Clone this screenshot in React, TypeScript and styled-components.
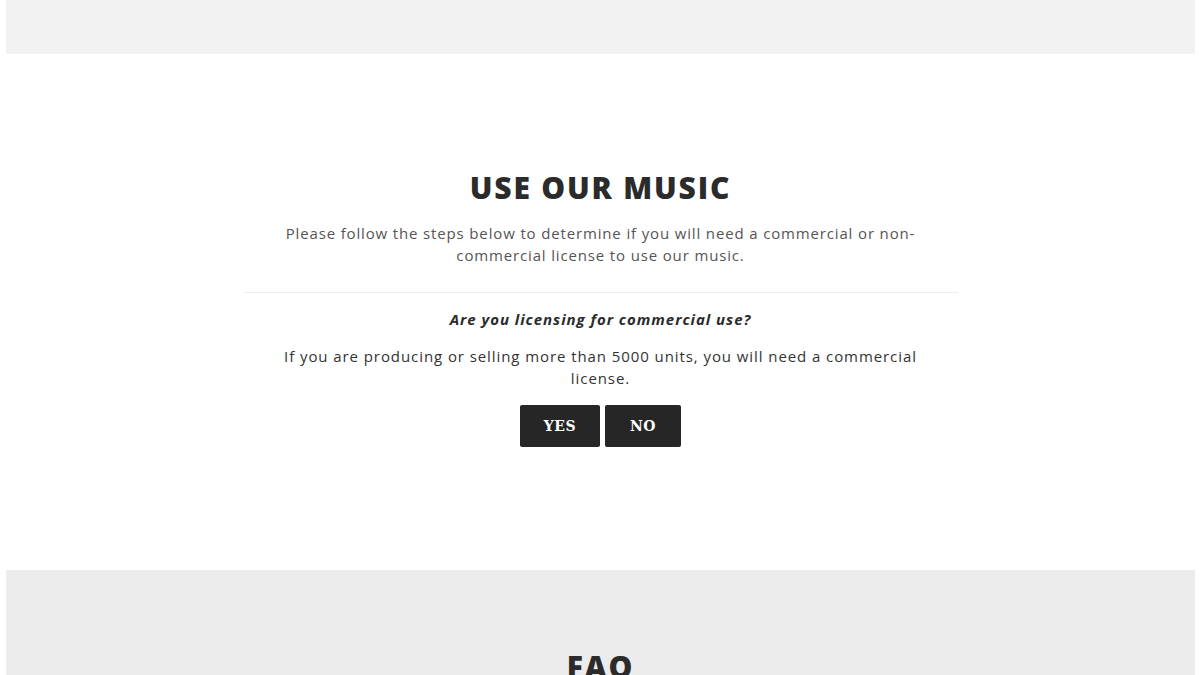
import React from "react";
import styled, { createGlobalStyle } from "styled-components";

const Global = createGlobalStyle`
  html, body { margin: 0; padding: 0; background: #fff; }
  body { font-family: "Open Sans", "Liberation Sans", sans-serif; overflow: hidden; }
`;

const Page = styled.div`
  padding: 0 5px 0 6px;
  width: 1200px;
  box-sizing: border-box;
`;

const TopBar = styled.header`
  height: 54px;
  background: #f2f2f2;
`;

const Main = styled.section`
  height: 516px;
  box-sizing: border-box;
  padding-top: 114px;
  display: flex;
  flex-direction: column;
  align-items: center;
`;

const Title = styled.h1`
  margin: 0;
  font-family: "Open Sans", sans-serif;
  font-weight: 800;
  font-size: 30px;
  line-height: 40px;
  color: #2b2b2b;
  letter-spacing: 1.8px;
`;

const Intro = styled.p`
  margin: 14px 0 0;
  width: 660px;
  text-align: center;
  font-size: 15px;
  line-height: 22px;
  letter-spacing: 0.85px;
  color: #555;
  font-weight: 400;
`;

const Divider = styled.hr`
  width: 714px;
  border: 0;
  border-top: 1px solid #ececec;
  margin: 26px 0 0;
`;

const Question = styled.h3`
  margin: 16px 0 0;
  font-size: 15px;
  line-height: 20px;
  letter-spacing: 0.95px;
  font-style: italic;
  font-weight: 700;
  color: #2b2b2b;
`;

const Detail = styled.p`
  margin: 16px 0 0;
  width: 660px;
  text-align: center;
  font-size: 15px;
  line-height: 22px;
  letter-spacing: 0.92px;
  color: #333;
`;

const Buttons = styled.div`
  margin-top: 16px;
  display: flex;
  gap: 5px;
`;

const Btn = styled.button<{ $w: number }>`
  width: ${(p) => p.$w}px;
  height: 42px;
  background: #262626;
  color: #fff;
  border: 0;
  border-radius: 2px;
  font-family: "DejaVu Serif", "Liberation Serif", serif;
  font-weight: 700;
  font-size: 14px;
  letter-spacing: 0.5px;
  cursor: pointer;
`;

const Faq = styled.section`
  height: 105px;
  overflow: hidden;
  background: #ececec;
  padding-top: 77px;
  box-sizing: border-box;
  display: flex;
  justify-content: center;
  align-items: flex-start;
`;

const FaqTitle = styled.h2`
  margin: 0;
  font-family: "Open Sans", sans-serif;
  font-weight: 800;
  font-size: 30px;
  line-height: 40px;
  letter-spacing: 1.8px;
  color: #2b2b2b;
`;

export default function App() {
  return (
    <>
      <Global />
      <Page>
        <TopBar />
        <Main>
          <Title>USE OUR MUSIC</Title>
          <Intro>
            Please follow the steps below to determine if you will need a commercial or non-commercial license to use our music.
          </Intro>
          <Divider />
          <Question>Are you licensing for commercial use?</Question>
          <Detail>
            If you are producing or selling more than 5000 units, you will need a commercial license.
          </Detail>
          <Buttons>
            <Btn $w={80}>YES</Btn>
            <Btn $w={76}>NO</Btn>
          </Buttons>
        </Main>
        <Faq>
          <FaqTitle>FAQ</FaqTitle>
        </Faq>
      </Page>
    </>
  );
}
